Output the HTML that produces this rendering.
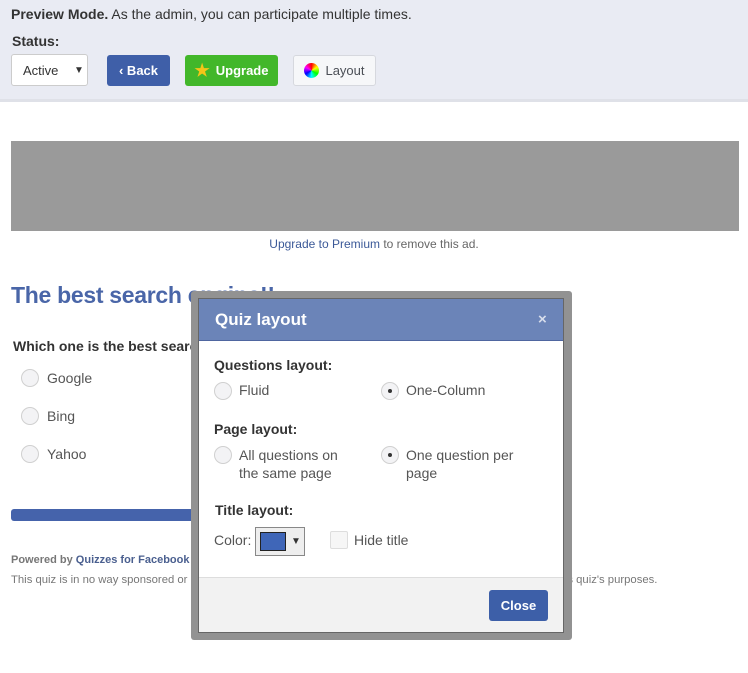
<!DOCTYPE html>
<html><head><style>
*{box-sizing:border-box;margin:0;padding:0}
body{width:748px;height:673px;background:#fff;font-family:"Liberation Sans",sans-serif;position:relative;overflow:hidden;color:#333}
.top{position:absolute;left:0;top:0;width:748px;height:102px;background:#e9ebf3;border-bottom:3px solid #dfe1e8}
.a{position:absolute}
.btn{position:absolute;top:55px;height:31px;border-radius:3px;font-size:13px;font-weight:bold;color:#fff;display:flex;align-items:center;justify-content:center}
.radio{position:absolute;width:18px;height:18px;border-radius:50%;border:1px solid #d0d0d0;background:#f3f3f5}
.radio.on::after{content:"";position:absolute;left:6px;top:6px;width:4px;height:4px;border-radius:50%;background:#333}
.t14{font-size:14px;color:#333}
</style></head><body>
<div class="top">
<div class="a" style="left:11px;top:6px;font-size:14px;color:#333"><b>Preview Mode.</b> As the admin, you can participate multiple times.</div>
<div class="a" style="left:12px;top:33px;font-size:14px;font-weight:bold;color:#333">Status:</div>
<div class="a" style="left:11px;top:54px;width:77px;height:32px;background:#fff;border:1px solid #ccc;border-radius:3px;font-size:13px;padding:8px 0 0 11px">Active<span style="position:absolute;left:62px;top:10px;font-size:10px">▼</span></div>
<div class="btn" style="left:107px;width:63px;background:#3f5fa8">‹ Back</div>
<div class="btn" style="left:185px;width:93px;background:#42b72a"><span style="color:#f5c518;font-size:17px;margin-right:6px">★</span>Upgrade</div>
<div class="btn" style="left:293px;width:83px;background:#f6f7f9;border:1px solid #d6d8de;color:#4b4f56;font-weight:normal"><span style="width:15px;height:15px;border-radius:50%;background:conic-gradient(red,#ff0,#0f0,#0ff,#00f,#f0f,red);margin-right:6px;display:inline-block"></span>Layout</div>
</div>
<div class="a" style="left:11px;top:141px;width:728px;height:90px;background:#9a9a9a"></div>
<div class="a" style="left:0;top:237px;width:748px;text-align:center;font-size:12px;color:#666"><span style="color:#3b5998">Upgrade to Premium</span> to remove this ad.</div>
<div class="a" style="left:11px;top:282px;font-size:23px;font-weight:bold;color:#4a66a8;letter-spacing:-0.3px">The best search engine!!</div>
<div class="a" style="left:13px;top:338px;font-size:14px;font-weight:bold;color:#333">Which one is the best search engine?</div>
<div class="radio" style="left:21px;top:369px"></div><div class="a t14" style="left:47px;top:370px;color:#555">Google</div>
<div class="radio" style="left:21px;top:407px"></div><div class="a t14" style="left:47px;top:408px;color:#555">Bing</div>
<div class="radio" style="left:21px;top:445px"></div><div class="a t14" style="left:47px;top:446px;color:#555">Yahoo</div>
<div class="a" style="left:11px;top:509px;width:560px;height:12px;background:#4563ab;border-radius:3px"></div>
<div class="a" style="left:11px;top:554px;font-size:11px;font-weight:bold;color:#777">Powered by <span style="color:#4a5f8f">Quizzes for Facebook</span></div>
<div class="a" style="left:11px;top:574px;font-size:11.3px;color:#777;white-space:nowrap">This quiz is in no way sponsored or administered by Facebook. Facebook is in no way responsible for any of this quiz's purposes.</div>

<div class="a" style="left:191px;top:291px;width:381px;height:349px;background:#929292;border-radius:3px"></div>
<div class="a" style="left:198px;top:298px;width:366px;height:335px;background:#fff;border:1px solid #666">
 <div class="a" style="left:0;top:0;width:364px;height:42px;background:#6b84b8;border-bottom:1px solid #4f66a0"></div>
 <div class="a" style="left:16px;top:11px;font-size:17px;font-weight:bold;color:#fff">Quiz layout</div>
 <div class="a" style="left:339px;top:12px;font-size:15px;color:#d8deec;font-weight:bold">×</div>
 <div class="a" style="left:15px;top:58px;font-size:14px;font-weight:bold">Questions layout:</div>
 <div class="radio" style="left:15px;top:83px"></div><div class="a t14" style="left:40px;top:83px;color:#555">Fluid</div>
 <div class="radio on" style="left:182px;top:83px"></div><div class="a t14" style="left:207px;top:83px;color:#555">One-Column</div>
 <div class="a" style="left:15px;top:122px;font-size:14px;font-weight:bold">Page layout:</div>
 <div class="radio" style="left:15px;top:147px"></div><div class="a t14" style="left:40px;top:147px;color:#555;line-height:18px">All questions on<br>the same page</div>
 <div class="radio on" style="left:182px;top:147px"></div><div class="a t14" style="left:207px;top:147px;color:#555;line-height:18px">One question per<br>page</div>
 <div class="a" style="left:16px;top:203px;font-size:14px;font-weight:bold">Title layout:</div>
 <div class="a t14" style="left:15px;top:233px;color:#555">Color:</div>
 <div class="a" style="left:56px;top:228px;width:50px;height:29px;border:1px solid #888;background:#eee"><div class="a" style="left:4px;top:4px;width:26px;height:19px;background:#3f66b8;border:1px solid #222"></div><span class="a" style="left:35px;top:8px;font-size:10px">▼</span></div>
 <div class="a" style="left:131px;top:232px;width:18px;height:18px;border:1px solid #ddd;background:#f6f6f6;border-radius:2px"></div>
 <div class="a t14" style="left:155px;top:233px;color:#555">Hide title</div>
 <div class="a" style="left:0;top:278px;width:364px;height:55px;background:#f2f2f2;border-top:1px solid #ddd"></div>
 <div class="a" style="left:290px;top:291px;width:59px;height:31px;background:#3d5fa8;border-radius:3px;color:#fff;font-size:13px;font-weight:bold;display:flex;align-items:center;justify-content:center">Close</div>
</div>
</body></html>
